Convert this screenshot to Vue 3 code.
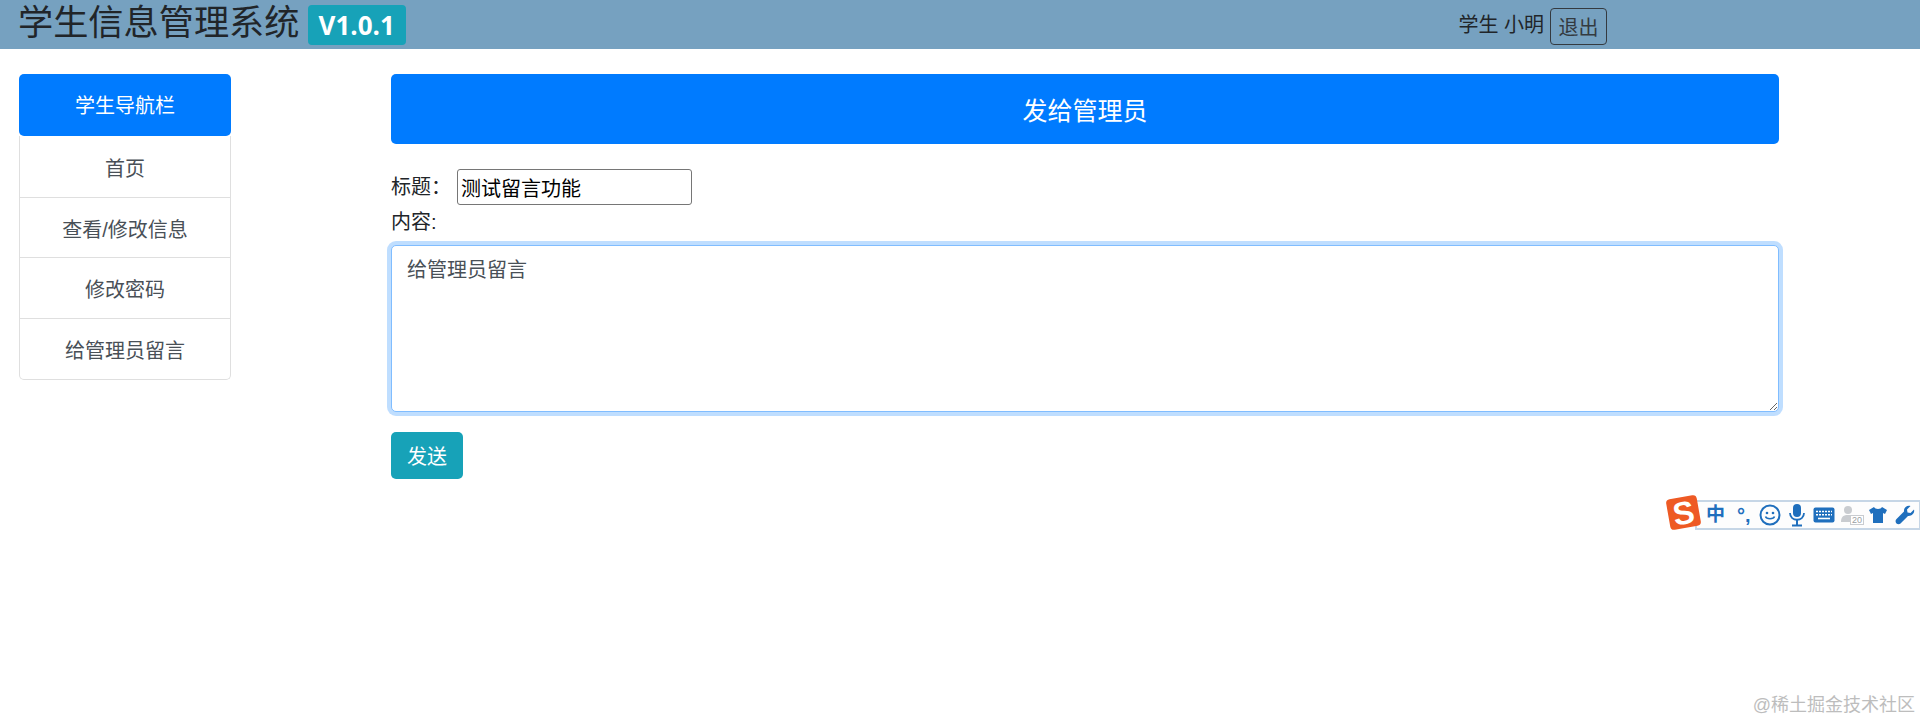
<script setup>
import { ref } from "vue";

const links = ["首页", "查看/修改信息", "修改密码", "给管理员留言"];
const title = ref("测试留言功能");
const content = ref("给管理员留言");
</script>

<template>
  <div class="page">
    <header class="topbar">
      <div class="brand">
        <span class="brand-name">学生信息管理系统</span>
        <span class="version">V1.0.1</span>
      </div>
      <div class="user">
        <span>学生 小明</span>
        <button class="logout">退出</button>
      </div>
    </header>

    <div class="body">
      <nav class="side">
        <div class="side-title">学生导航栏</div>
        <ul class="side-list">
          <li v-for="link in links" :key="link">{{ link }}</li>
        </ul>
      </nav>

      <main class="main">
        <div class="main-title">发给管理员</div>
        <div class="title-row">
          <label>标题：</label>
          <input v-model="title" class="title-input" type="text" />
        </div>
        <label class="content-label">内容:</label>
        <textarea v-model="content" class="content-input"></textarea>
        <button class="send">发送</button>
      </main>
    </div>

    <div class="ime">
      <span class="ime-logo"><span>S</span></span>
      <span class="ime-zh">中</span>
      <span class="ime-punct">°,</span>
      <svg class="ime-icon smile" width="22" height="22" viewBox="0 0 22 22">
        <circle cx="11" cy="11" r="9.500" fill="none" stroke="#1f6fbd" stroke-width="2" />
        <circle cx="8" cy="9" r="1.300" fill="#1f6fbd" />
        <circle cx="14" cy="9" r="1.300" fill="#1f6fbd" />
        <path d="M6.500 12.500c1 3 8 3 9 0" fill="none" stroke="#1f6fbd" stroke-width="1.600" />
      </svg>
      <svg class="ime-icon mic" width="18" height="24" viewBox="0 0 18 24">
        <rect x="5" y="1" width="8" height="13" rx="4" fill="#1f6fbd" />
        <path d="M2 10c0 9 14 9 14 0" fill="none" stroke="#1f6fbd" stroke-width="1.800" />
        <path d="M9 17v5M4 22.500h10" stroke="#1f6fbd" stroke-width="2" />
      </svg>
      <svg class="ime-icon keys" width="22" height="16" viewBox="0 0 22 16">
        <rect x="0.500" y="0.500" width="21" height="15" rx="2" fill="#1f6fbd" />
        <path d="M3 4.500h16M3 7.800h16" stroke="#fff" stroke-width="1.600" stroke-dasharray="2 1" />
        <path d="M5 11.500h12" stroke="#fff" stroke-width="1.600" />
      </svg>
      <span class="ime-user">
        <svg width="20" height="22" viewBox="0 0 20 22">
          <circle cx="8" cy="6" r="4" fill="#c9ccd0" />
          <path d="M1 18c0-6 3-7 7-7s7 1 7 7z" fill="#c9ccd0" />
        </svg>
        <span class="ime-count">20</span>
      </span>
      <svg class="ime-icon shirt" width="20" height="18" viewBox="0 0 20 18">
        <path d="M6 1 L1 4 L3 8 L5 7 V17 H15 V7 L17 8 L19 4 L14 1 C13 3.500 7 3.500 6 1Z" fill="#1f6fbd" />
      </svg>
      <svg class="ime-icon wrench" width="20" height="20" viewBox="0 0 20 20">
        <path d="M19 4.500 L15.500 8 L12.500 7.500 L12 4.500 L15.500 1 C12 0 8.500 2.500 9 6.500 L1.500 14 C0 15.500 0.500 17.500 1.500 18.500 C2.500 19.500 4.500 19.500 5.500 18.500 L13 11 C17 11.500 20 8 19 4.500Z" fill="#1f6fbd" />
      </svg>
    </div>

    <div class="watermark">@稀土掘金技术社区</div>
  </div>
</template>

<style>
html,
body {
  margin: 0;
  background: #fff;
}
</style>

<style scoped>
.page {
  position: relative;
  height: 722px;
  overflow: hidden;
  font-family: "Liberation Sans", "Noto Sans CJK SC", sans-serif;
  font-size: 20px;
  line-height: 30px;
  color: #212529;
}

.topbar {
  display: flex;
  justify-content: space-between;
  align-items: center;
  height: 49px;
  padding: 0 313px 0 18px;
  background: #76a1c0;
}

.brand {
  display: flex;
  align-items: center;
  gap: 8px;
}

.brand-name {
  margin-bottom: 4px;
  font-size: 35.200px;
  line-height: 44px;
}

.version {
  padding: 0 11px;
  height: 40px;
  line-height: 40px;
  border-radius: 4px;
  background: #17a2b8;
  color: #fff;
  font-size: 26px;
  font-weight: 700;
  font-family: "Open Sans", "Liberation Sans", sans-serif;
}

.user {
  display: flex;
  align-items: center;
  gap: 6px;
}

.logout {
  width: 57px;
  height: 37px;
  padding: 2px 0 0;
  margin-top: 4px;
  border: 1px solid #343a40;
  border-radius: 4px;
  background: transparent;
  color: #343a40;
  font: inherit;
}

.body {
  display: flex;
  align-items: flex-start;
  padding: 25px 0 0 19px;
}

.side {
  width: 212px;
}

.side-title {
  height: 62px;
  line-height: 64px;
  border-radius: 5px;
  background: #007bff;
  color: #fff;
  text-align: center;
}

.side-list {
  margin: 0;
  padding: 1px 0 0;
  list-style: none;
  border: 1px solid #dfdfdf;
  border-top: 0;
  border-radius: 0 0 5px 5px;
}

.side-list li {
  height: 57.670px;
  padding-top: 2px;
  line-height: 60px;
  text-align: center;
  color: #495057;
  border-bottom: 1px solid #dfdfdf;
}

.side-list li:last-child {
  border-bottom: 0;
}

.main {
  display: flex;
  flex-direction: column;
  align-items: flex-start;
  width: 1388px;
  margin-left: 160px;
}

.main-title {
  width: 100%;
  height: 70px;
  line-height: 74px;
  border-radius: 5px;
  background: #007bff;
  color: #fff;
  font-size: 25px;
  text-align: center;
}

.title-row {
  display: flex;
  align-items: center;
  gap: 6px;
  height: 36px;
  margin-top: 25px;
}

.title-input {
  box-sizing: border-box;
  width: 235px;
  height: 36px;
  padding: 1px 3px;
  border: 1px solid #767676;
  border-radius: 3px;
  outline: none;
  color: #000;
  font: inherit;
}

.content-label {
  margin-top: 2px;
}

.content-input {
  box-sizing: border-box;
  width: 100%;
  height: 167px;
  margin-top: 8px;
  padding: 9px 15px;
  border: 1px solid #80bdff;
  border-radius: 5px;
  outline: none;
  box-shadow: 0 0 0 4px rgba(0, 123, 255, 0.25);
  color: #495057;
  font: inherit;
}

.send {
  width: 72px;
  height: 47px;
  margin-top: 20px;
  padding: 2px 0 0;
  border: 0;
  border-radius: 5px;
  background: #17a2b8;
  color: #fff;
  font: inherit;
}

.ime {
  position: absolute;
  top: 500px;
  right: 0;
  display: flex;
  align-items: center;
  box-sizing: border-box;
  width: 225px;
  height: 30px;
  padding-left: 9px;
  border: 2px solid #c6d6e6;
  border-right-width: 1px;
  background: #fdfdfd;
}

.ime-logo {
  position: absolute;
  top: -5px;
  left: -29px;
  display: flex;
  align-items: center;
  justify-content: center;
  width: 31px;
  height: 31px;
  border-radius: 4px;
  background: #ee5a24;
  transform: rotate(-10deg);
  color: #fff;
  font-family: "Liberation Sans", sans-serif;
  font-size: 32px;
  font-weight: 700;
}

.ime-zh {
  flex: none;
  width: 20px;
  color: #1f6fbd;
  font-size: 19px;
  font-weight: 700;
}

.ime-punct {
  flex: none;
  width: 14px;
  margin-left: 11px;
  color: #1f6fbd;
  font-size: 20px;
  font-weight: 700;
}

.ime-icon {
  flex: none;
}

.smile {
  margin-left: 8px;
}

.mic {
  margin-left: 7px;
}

.keys {
  margin-left: 7px;
}

.shirt {
  margin-left: 8px;
}

.wrench {
  margin-left: 7px;
}

.ime-user {
  position: relative;
  display: flex;
  flex: none;
  width: 20px;
  margin-left: 5px;
}

.ime-count {
  position: absolute;
  right: -4px;
  bottom: 1px;
  padding: 0 1px;
  background: #fff;
  border: 1px solid #c9ccd0;
  color: #9a9ea3;
  font-size: 9px;
  line-height: 8px;
}

.watermark {
  position: absolute;
  right: 5px;
  bottom: 2px;
  color: #bdbdbd;
  font-size: 18px;
}
</style>
